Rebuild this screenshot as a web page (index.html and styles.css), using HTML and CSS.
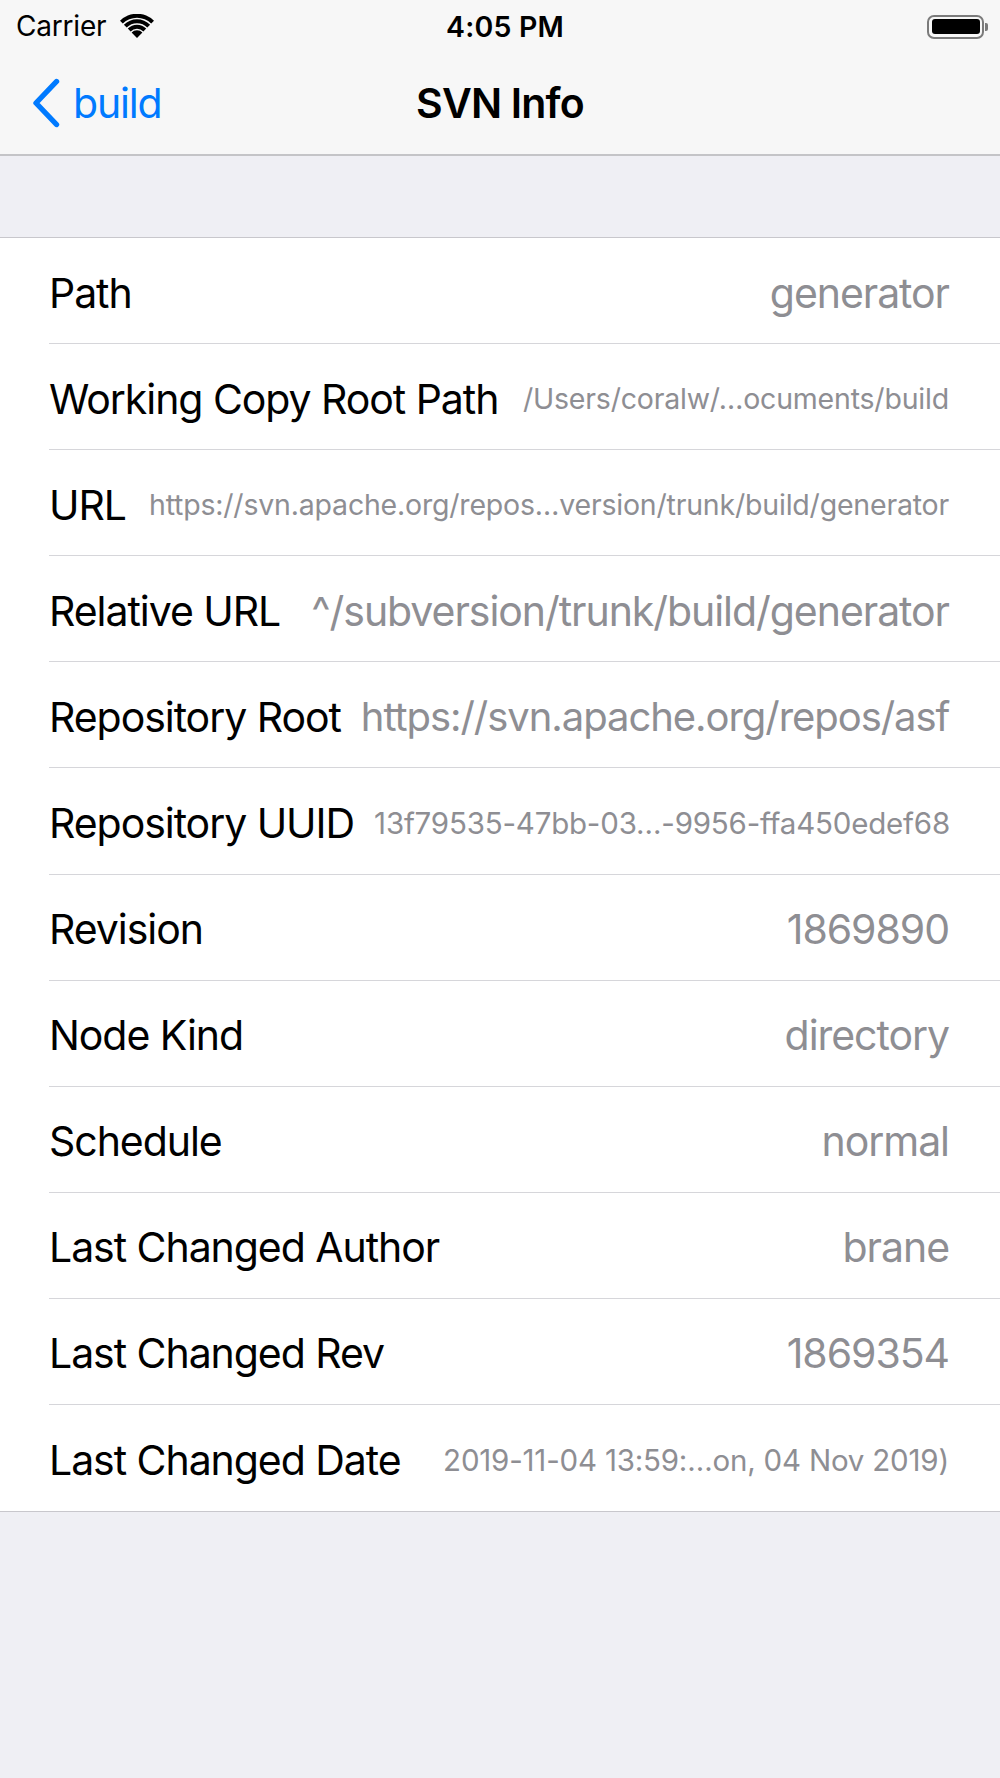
FILE: index.html
```html
<!DOCTYPE html>
<html lang="en">
<head>
<meta charset="utf-8">
<title>SVN Info</title>
<link rel="stylesheet" href="styles.css">
</head>
<body>
<div class="screen">
  <header class="topbar">
    <div class="status">
      <div class="status-left">
        <span class="carrier">Carrier</span>
        <svg class="wifi" width="34" height="24" viewBox="0 0 34 24">
          <path d="M17 24 L11.6 18.4 A7.6 7.6 0 0 1 22.4 18.4 Z" fill="#000"/>
          <path d="M7.8 14.6 A13 13 0 0 1 26.2 14.6 L23.4 17.4 A9 9 0 0 0 10.6 17.4 Z" fill="#000"/>
          <path d="M3.9 10.7 A18.6 18.6 0 0 1 30.1 10.7 L27.3 13.5 A14.6 14.6 0 0 0 6.7 13.5 Z" fill="#000"/>
          <path d="M0 6.8 A24 24 0 0 1 34 6.8 L31.2 9.6 A20 20 0 0 0 2.8 9.6 Z" fill="#000"/>
        </svg>
      </div>
      <span class="time">4:05 PM</span>
      <div class="status-right">
        <span class="battery"><span class="battery-fill"></span></span>
        <span class="battery-nub"></span>
      </div>
    </div>
    <nav class="navbar">
      <a class="back" href="#">
        <svg class="chevron" width="30" height="50" viewBox="0 0 30 50">
          <path d="M25.5 3.5 L5 25 L25.5 46.5" fill="none" stroke="#007aff" stroke-width="5.4" stroke-linecap="round" stroke-linejoin="round"/>
        </svg>
        <span class="back-label">build</span>
      </a>
      <h1 class="title">SVN Info</h1>
    </nav>
  </header>

  <main class="content">
    <ul class="group">
      <li class="row"><span class="label">Path</span><span class="value">generator</span></li>
      <li class="row"><span class="label">Working Copy Root Path</span><span class="value v-s2">/Users/coralw/…ocuments/build</span></li>
      <li class="row"><span class="label">URL</span><span class="value v-s2">https://svn.apache.org/repos…version/trunk/build/generator</span></li>
      <li class="row"><span class="label">Relative URL</span><span class="value">^/subversion/trunk/build/generator</span></li>
      <li class="row"><span class="label">Repository Root</span><span class="value v-s0">https://svn.apache.org/repos/asf</span></li>
      <li class="row"><span class="label">Repository UUID</span><span class="value v-s1">13f79535-47bb-03…-9956-ffa450edef68</span></li>
      <li class="row"><span class="label">Revision</span><span class="value">1869890</span></li>
      <li class="row"><span class="label">Node Kind</span><span class="value">directory</span></li>
      <li class="row"><span class="label">Schedule</span><span class="value">normal</span></li>
      <li class="row"><span class="label">Last Changed Author</span><span class="value">brane</span></li>
      <li class="row"><span class="label">Last Changed Rev</span><span class="value">1869354</span></li>
      <li class="row"><span class="label">Last Changed Date</span><span class="value v-s1">2019-11-04 13:59:…on, 04 Nov 2019)</span></li>
    </ul>
  </main>
</div>
</body>
</html>
```

FILE: styles.css
```css
* { box-sizing: border-box; }

html, body {
  margin: 0;
  padding: 0;
  background: #efeff4;
}

body {
  font-family: Inter, "Noto Sans", "Liberation Sans", sans-serif;
  color: #000;
}

.screen {
  width: 1000px;
  min-height: 1778px;
  background: #efeff4;
}

.topbar {
  background: #f7f7f7;
  border-bottom: 2px solid #c4c4c7;
}

.status {
  height: 50px;
  display: flex;
  align-items: center;
  justify-content: space-between;
  padding: 2px 12px 0 16px;
  position: relative;
}

.status-left {
  display: flex;
  align-items: center;
  gap: 14px;
}

.carrier {
  font-size: 28px;
  letter-spacing: -0.2px;
}

.wifi { display: block; margin-top: -1px; }

.time {
  position: absolute;
  left: 0;
  right: 0;
  top: 2px;
  bottom: 0;
  display: flex;
  align-items: center;
  justify-content: center;
  padding-left: 10px;
  font-size: 28.5px;
  font-weight: 600;
  letter-spacing: 0.2px;
}

.status-right {
  display: flex;
  align-items: center;
  margin-top: 1px;
}

.battery {
  width: 57px;
  height: 24px;
  border: 2.5px solid #7b7b7b;
  border-radius: 7px;
  padding: 2.5px;
  display: flex;
}

.battery-fill {
  flex: 1;
  background: #000;
  border-radius: 3px;
}

.battery-nub {
  width: 3px;
  height: 8px;
  background: #7b7b7b;
  border-radius: 0 2px 2px 0;
  margin-left: 1px;
}

.navbar {
  height: 104px;
  display: flex;
  align-items: center;
  position: relative;
}

.back {
  display: flex;
  align-items: center;
  text-decoration: none;
  color: #007aff;
  padding-left: 31px;
  gap: 12px;
  position: relative;
  z-index: 1;
  margin-top: 2px;
}

.chevron { display: block; }

.back-label {
  font-size: 41px;
  letter-spacing: -1.2px;
}

.title {
  position: absolute;
  left: 0;
  right: 0;
  margin: 0;
  margin-top: 2px;
  text-align: center;
  font-size: 41px;
  font-weight: 600;
  letter-spacing: -0.8px;
}

.content {
  padding-top: 81px;
}

.group {
  list-style: none;
  margin: 0;
  padding: 0 0 0 49px;
  background: #fff;
  border-top: 1px solid #c8c7cc;
  border-bottom: 1px solid #c8c7cc;
}

.row {
  height: 106.1px;
  display: flex;
  align-items: center;
  justify-content: space-between;
  gap: 20px;
  padding-right: 51px;
  padding-top: 4px;
  border-bottom: 1px solid #d6d6da;
}

.row:last-child { border-bottom: none; }

.label {
  font-size: 41px;
  letter-spacing: -1.05px;
  white-space: nowrap;
  flex-shrink: 0;
}

.value {
  font-size: 41px;
  letter-spacing: -1.05px;
  color: #8e8e93;
  white-space: nowrap;
}

.v-s0 { font-size: 40px; letter-spacing: -1.05px; }
.v-s1 { font-size: 29.5px; letter-spacing: -0.2px; }
.v-s2 { font-size: 28.5px; letter-spacing: -0.2px; }
```
